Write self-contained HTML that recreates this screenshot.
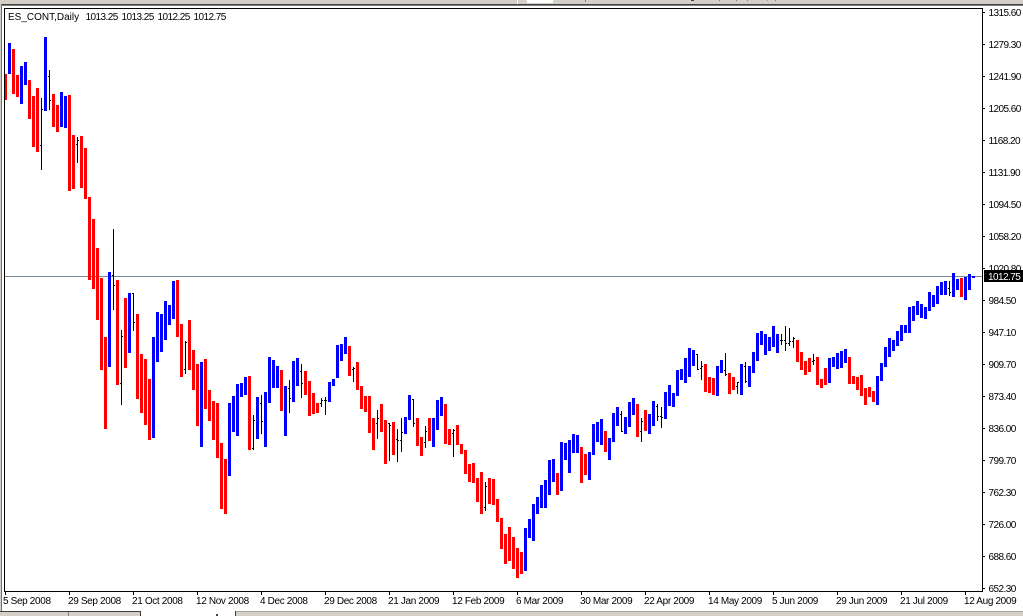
<!DOCTYPE html>
<html>
<head>
<meta charset="utf-8">
<title>ES_CONT,Daily</title>
<style>
html,body{margin:0;padding:0;background:#fff;width:1023px;height:616px;overflow:hidden}
svg{display:block}
text{font-family:"Liberation Sans",sans-serif;font-size:10px;fill:#000;letter-spacing:-.35px}
.y text{letter-spacing:-.55px}
.h{letter-spacing:-.55px}
.t{letter-spacing:0}
</style>
</head>
<body>
<svg width="1023" height="616" viewBox="0 0 1023 616" xmlns="http://www.w3.org/2000/svg" shape-rendering="crispEdges">
<rect width="1023" height="616" fill="#fff"/>
<!-- window chrome -->
<rect x="0" y="0" width="1023" height="4" fill="#d4d0c8"/>
<rect x="0" y="4" width="1023" height="1" fill="#404040"/>
<rect x="0" y="5" width="1023" height="1" fill="#808080"/>
<rect x="0" y="4" width="1" height="608" fill="#d4d0c8"/>
<rect x="1" y="4" width="1" height="608" fill="#707070"/>
<rect x="517" y="0" width="1" height="4" fill="#fff"/>
<rect x="527" y="0" width="26" height="3" fill="#fff"/>
<rect x="585" y="0" width="1" height="2" fill="#808080"/>
<rect x="691" y="0" width="3" height="1" fill="#404040"/>
<rect x="719" y="0" width="1" height="1" fill="#808080"/>
<rect x="736" y="0" width="1" height="1" fill="#808080"/>
<rect x="747" y="0" width="1" height="1" fill="#808080"/>
<rect x="767" y="0" width="1" height="1" fill="#a0a0a0"/>
<rect x="775" y="0" width="1" height="1" fill="#808080"/>
<!-- price line -->
<rect x="5" y="276" width="977" height="1" fill="#778899"/>
<!-- red bars -->
<path fill="none" stroke="#ff0000" stroke-width="3" d="M5.5 74V100M13.5 49V94M17.5 75V97M29.5 80V119M33.5 96V147M37.5 88V152M53.5 94V127M57.5 105V132M69.5 95V191M73.5 135V189M81.5 136V188M85.5 148V199M89.5 197V280M93.5 219V289M97.5 248V320M101.5 278V370M105.5 337V429M117.5 280V385M125.5 298V368M137.5 314V399M141.5 354V413M145.5 359V425M149.5 379V440M177.5 280V337M181.5 324V377M189.5 320V370M193.5 350V390M197.5 364V426M205.5 359V409M209.5 390V421M213.5 401V440M217.5 403V458M221.5 443V509M225.5 459V514M249.5 376V450M281.5 370V411M305.5 371V395M309.5 381V416M313.5 393V414M317.5 403V413M349.5 346V376M357.5 362V390M361.5 386V409M365.5 396V412M369.5 396V433M373.5 418V450M381.5 404V432M385.5 420V464M393.5 422V455M417.5 418V446M421.5 437V456M429.5 418V441M445.5 404V444M449.5 429V445M457.5 425V445M461.5 444V454M465.5 450V474M469.5 464V482M473.5 463V483M477.5 478V502M481.5 472V514M489.5 478V504M493.5 479V505M497.5 499V522M501.5 518V549M505.5 534V564M509.5 527V561M513.5 537V569M517.5 548V578M521.5 552V574M557.5 473V495M581.5 447V483M585.5 454V475M605.5 431V452M637.5 404V437M645.5 410V431M705.5 364V392M709.5 377V393M713.5 378V395M729.5 373V394M733.5 377V390M797.5 340V362M801.5 352V370M805.5 361V375M809.5 358V372M817.5 357V385M821.5 379V388M825.5 368V385M849.5 357V384M853.5 376V384M857.5 377V390M861.5 375V396M865.5 388V405M869.5 387V397M873.5 391V402M961.5 278V297"/>
<!-- blue bars -->
<path fill="none" stroke="#0000ff" stroke-width="3" d="M9.5 43V74M21.5 66V104M25.5 62V85M45.5 37V111M61.5 92V127M65.5 96V128M109.5 272V367M129.5 293V353M153.5 337V438M157.5 312V362M161.5 314V352M165.5 301V340M169.5 305V325M173.5 281V319M201.5 362V447M229.5 403V476M233.5 396V432M237.5 384V436M241.5 383V397M245.5 377V395M257.5 397V439M265.5 392V447M269.5 357V403M273.5 360V388M277.5 366V388M285.5 386V436M293.5 361V402M297.5 358V386M329.5 382V402M333.5 379V386M337.5 345V378M341.5 344V361M345.5 337V354M405.5 417V434M409.5 395V420M433.5 418V447M437.5 400V430M441.5 397V416M525.5 528V571M529.5 519V538M533.5 504V541M537.5 497V514M541.5 485V508M545.5 480V508M549.5 460V495M553.5 459V482M561.5 442V491M565.5 443V460M569.5 440V473M573.5 434V453M577.5 435V453M589.5 452V480M593.5 424V455M597.5 422V442M601.5 419V445M609.5 438V460M613.5 413V442M617.5 407V426M625.5 417V434M629.5 402V427M633.5 398V415M649.5 414V434M653.5 401V426M665.5 392V419M669.5 385V406M673.5 393V407M677.5 370V396M681.5 369V380M685.5 358V383M689.5 348V377M693.5 350V366M717.5 366V396M721.5 360V373M741.5 364V395M749.5 366V387M753.5 352V373M757.5 333V361M761.5 331V345M765.5 334V355M769.5 337V351M773.5 326V347M777.5 334V353M829.5 358V383M833.5 357V367M837.5 353V369M841.5 351V368M845.5 349V363M877.5 376V405M881.5 363V381M885.5 347V367M889.5 338V357M893.5 340V351M897.5 331V346M901.5 325V341M905.5 325V333M909.5 307V333M913.5 306V321M917.5 301V315M921.5 304V318M925.5 307V319M929.5 292V311M933.5 295V307M937.5 286V304M941.5 282V295M945.5 281V295M953.5 273V297M957.5 279V290M965.5 277V300M969.5 274V290M973.5 276V278"/>
<!-- doji bars -->
<path fill="none" stroke="#000" stroke-width="1" d="M41.5 98V170M40 145.5h1M42 109.5h1M49.5 70V110M48 76.5h1M50 100.5h1M77.5 137V163M76 144.5h1M78 140.5h1M113.5 229V310M112 275.5h1M114 285.5h1M121.5 330V405M120 383.5h1M122 336.5h1M133.5 293V331M132 293.5h1M134 322.5h1M185.5 341V374M184 369.5h1M186 342.5h1M253.5 415V450M252 448.5h1M254 420.5h1M261.5 395V434M260 403.5h1M262 421.5h1M289.5 380V413M288 388.5h1M290 398.5h1M301.5 364V398M300 371.5h1M302 383.5h1M321.5 398V407M320 403.5h1M322 400.5h1M325.5 397V415M324 400.5h1M326 400.5h1M353.5 367V382M352 369.5h1M354 368.5h1M377.5 410V439M376 423.5h1M378 418.5h1M389.5 423V461M388 423.5h1M390 425.5h1M397.5 429V462M396 439.5h1M398 440.5h1M401.5 418V452M400 440.5h1M402 432.5h1M413.5 399V427M412 399.5h1M414 423.5h1M425.5 426V448M424 442.5h1M426 431.5h1M453.5 429V457M452 433.5h1M454 430.5h1M485.5 482V511M484 507.5h1M486 486.5h1M621.5 411V432M620 414.5h1M622 431.5h1M641.5 418V442M640 431.5h1M642 421.5h1M657.5 404V421M656 406.5h1M658 416.5h1M661.5 407V428M660 416.5h1M662 417.5h1M697.5 354V370M696 354.5h1M698 369.5h1M701.5 361V380M700 368.5h1M702 366.5h1M725.5 353V376M724 370.5h1M726 374.5h1M737.5 382V394M736 386.5h1M738 382.5h1M745.5 362V383M744 366.5h1M746 381.5h1M781.5 334V345M780 340.5h1M782 340.5h1M785.5 326V351M784 340.5h1M786 343.5h1M789.5 328V346M788 343.5h1M790 341.5h1M793.5 337V348M792 341.5h1M794 338.5h1M813.5 354V365M812 361.5h1M814 360.5h1M949.5 281V296M948 288.5h1M950 292.5h1"/>
<!-- chart frame -->
<rect x="4" y="8" width="979" height="1" fill="#000"/>
<rect x="4" y="8" width="1" height="584" fill="#000"/>
<rect x="982" y="8" width="1" height="584" fill="#000"/>
<rect x="4" y="591" width="979" height="1" fill="#000"/>
<!-- y ticks -->
<path fill="none" stroke="#000" stroke-width="1" d="M983 12.5h2M983 44.5h2M983 76.5h2M983 108.5h2M983 140.5h2M983 172.5h2M983 204.5h2M983 236.5h2M983 268.5h2M983 300.5h2M983 332.5h2M983 364.5h2M983 396.5h2M983 428.5h2M983 460.5h2M983 492.5h2M983 524.5h2M983 556.5h2M983 588.5h2"/>
<!-- x ticks -->
<path fill="none" stroke="#000" stroke-width="1" d="M5.5 592v3M69.5 592v3M133.5 592v3M197.5 592v3M261.5 592v3M325.5 592v3M389.5 592v3M453.5 592v3M517.5 592v3M581.5 592v3M645.5 592v3M709.5 592v3M773.5 592v3M837.5 592v3M901.5 592v3M965.5 592v3"/>
<!-- header -->
<text x="8" y="20" class="t">ES_CONT,Daily</text>
<text x="85.5" y="20" class="h">1013.25</text>
<text x="121.5" y="20" class="h">1013.25</text>
<text x="157.5" y="20" class="h">1012.25</text>
<text x="193.5" y="20" class="h">1012.75</text>
<!-- y labels -->
<g class="y">
<text x="988.5" y="16">1315.60</text>
<text x="988.5" y="48">1279.30</text>
<text x="988.5" y="80">1241.90</text>
<text x="988.5" y="112">1205.60</text>
<text x="988.5" y="144">1168.20</text>
<text x="988.5" y="176">1131.90</text>
<text x="988.5" y="208">1094.50</text>
<text x="988.5" y="240">1058.20</text>
<text x="988.5" y="272">1020.80</text>
<text x="988.5" y="304">984.50</text>
<text x="988.5" y="336">947.10</text>
<text x="988.5" y="368">909.70</text>
<text x="988.5" y="400">873.40</text>
<text x="988.5" y="432">836.00</text>
<text x="988.5" y="464">799.70</text>
<text x="988.5" y="496">762.30</text>
<text x="988.5" y="528">726.00</text>
<text x="988.5" y="560">688.60</text>
<text x="988.5" y="592">652.30</text>
</g>
<!-- current price -->
<rect x="984" y="270" width="39" height="12" fill="#000"/>
<text x="988" y="280" class="h" style="fill:#fff">1012.75</text>
<!-- x labels -->
<text x="3" y="604">5 Sep 2008</text>
<text x="68" y="604">29 Sep 2008</text>
<text x="132" y="604">21 Oct 2008</text>
<text x="196" y="604">12 Nov 2008</text>
<text x="260" y="604">4 Dec 2008</text>
<text x="324" y="604">29 Dec 2008</text>
<text x="388" y="604">21 Jan 2009</text>
<text x="452" y="604">12 Feb 2009</text>
<text x="516" y="604">6 Mar 2009</text>
<text x="580" y="604">30 Mar 2009</text>
<text x="644" y="604">22 Apr 2009</text>
<text x="708" y="604">14 May 2009</text>
<text x="772" y="604">5 Jun 2009</text>
<text x="836" y="604">29 Jun 2009</text>
<text x="900" y="604">21 Jul 2009</text>
<text x="964" y="604">12 Aug 2009</text>
<!-- bottom tabs -->
<rect x="0" y="611" width="1023" height="5" fill="#d4d0c8"/>
<rect x="0" y="611" width="140" height="1" fill="#404040"/>
<rect x="68" y="612" width="1" height="4" fill="#808080"/>
<rect x="140" y="611" width="95" height="5" fill="#fff"/>
<rect x="140" y="611" width="1" height="5" fill="#404040"/>
<rect x="235" y="611" width="1" height="5" fill="#404040"/>
<rect x="216" y="614" width="2" height="2" fill="#404040"/>
<rect x="236" y="611" width="787" height="1" fill="#a8a49c"/>
</svg>
</body>
</html>
